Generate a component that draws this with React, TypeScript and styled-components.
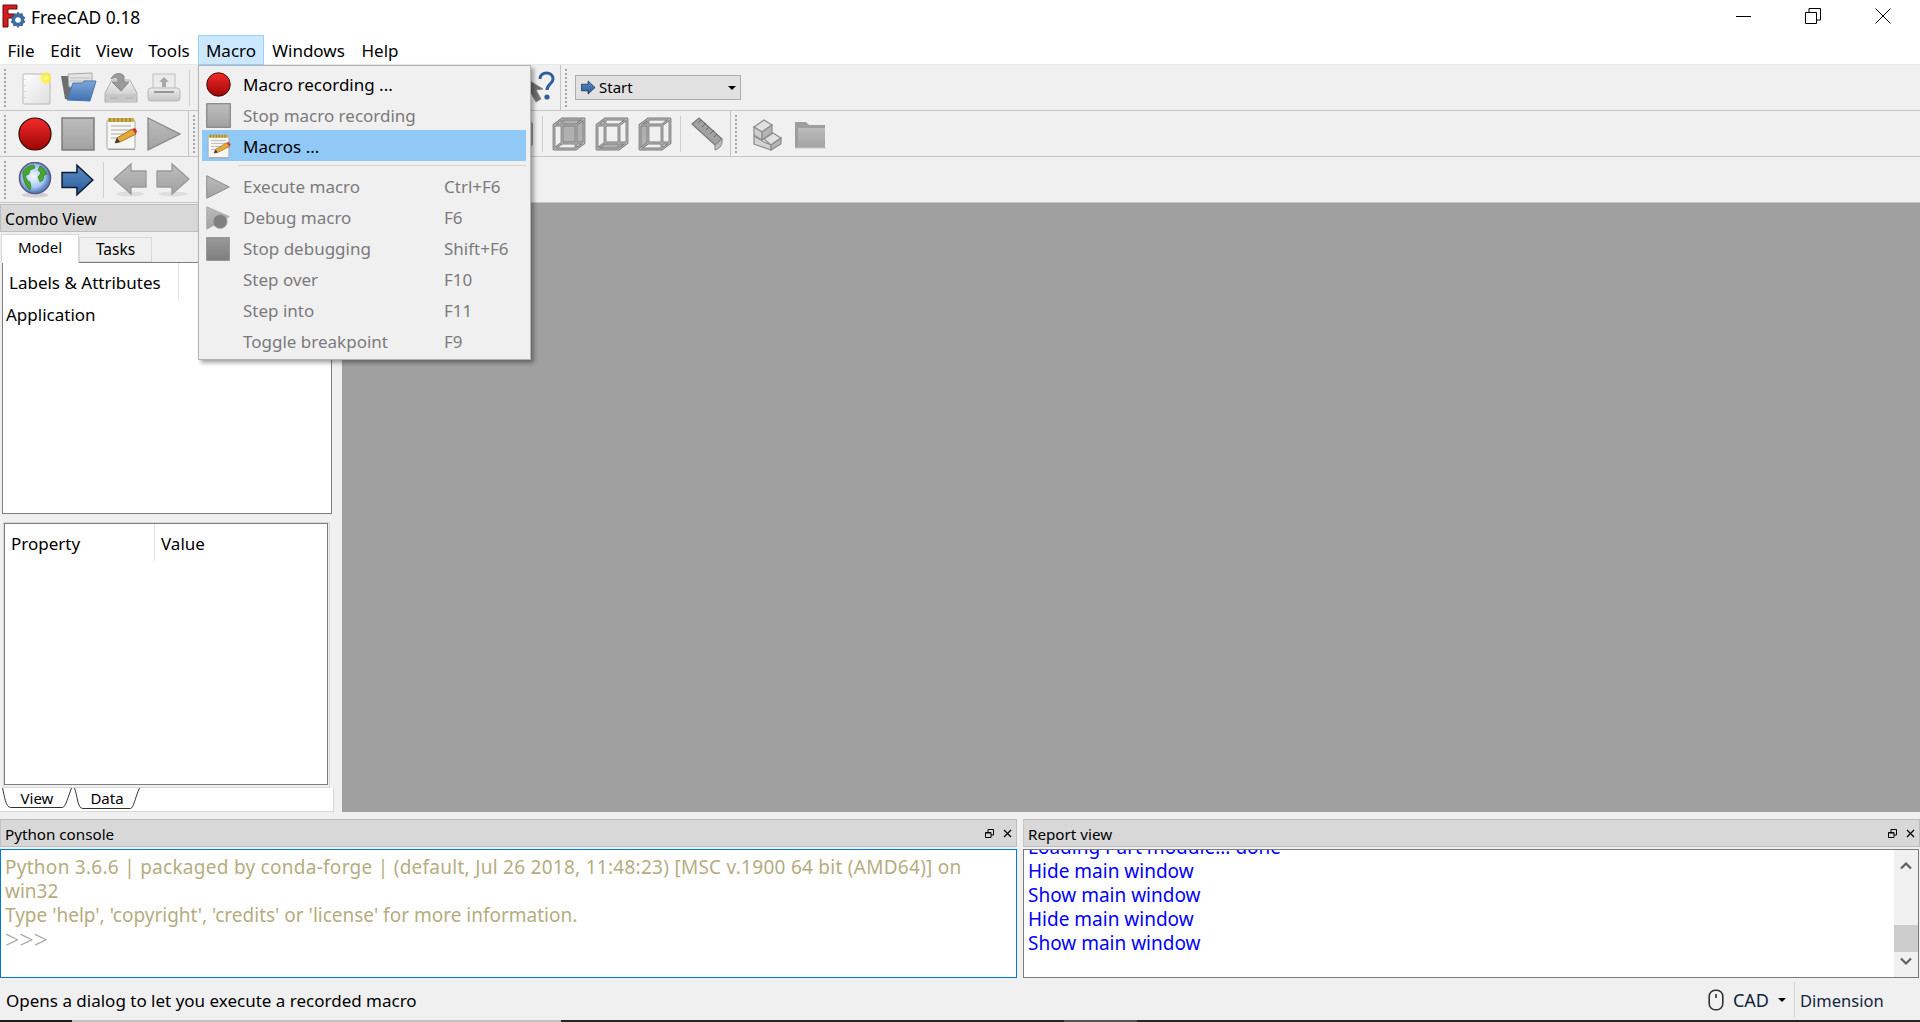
import React from "react";
import styled, { createGlobalStyle } from "styled-components";

const Global = createGlobalStyle`
  html, body { margin: 0; padding: 0; background: #f0f0f0; overflow: hidden; }
  body { font-family: "Noto Sans", "Open Sans", "Liberation Sans", sans-serif; font-size: 17px; color: #000; }
  * { box-sizing: border-box; }
`;

const Page = styled.div`
  position: relative; width: 1920px; height: 1022px; display: flex; flex-direction: column; overflow: hidden;
`;
const TitleBar = styled.div`
  height: 32px; background: #fff; display: flex; align-items: center; padding: 0 2px 0 2px;
`;
const TitleText = styled.span`margin-left: 5px; flex: 1; font-size: 17.4px; padding-top: 2px;`;
const WinBtn = styled.div`width: 70px; height: 32px; display: flex; align-items: center; justify-content: center; color: #000;`;
const MenuBar = styled.div`
  height: 33px; background: #fff; border-bottom: 1px solid #e8e8e8; display: flex; padding-top: 3px;
`;
const MenuItem = styled.div<{ $w: number; $active?: boolean }>`
  width: ${p => p.$w}px; height: 30px; display: flex; align-items: center; justify-content: center; padding-top: 1px;
  background: ${p => (p.$active ? "#cce8ff" : "transparent")};
  border: 1px solid ${p => (p.$active ? "#99d1ff" : "transparent")};
`;
const ToolRow = styled.div`
  height: 46px; background: #f0f0f0; border-bottom: 1px solid #c6c6c6; display: flex; align-items: center;
`;
const Grip = styled.div<{ $w?: number }>`
  width: ${p => p.$w ?? 14}px; height: 38px; flex: none;
  background-image: repeating-linear-gradient(to bottom, #a6a6a6 0 2px, transparent 2px 4px);
  background-size: 2px 100%; background-position: 4px 0; background-repeat: no-repeat;
`;
const Slot = styled.div<{ $w?: number }>`
  width: ${p => p.$w ?? 43}px; height: 40px; flex: none; display: flex; align-items: center; justify-content: center;
`;
const Sep = styled.div`
  width: 9px; height: 36px; flex: none; position: relative;
  background: linear-gradient(#cfcfcf, #cfcfcf) 4px 0 / 1px 100% no-repeat;
`;
const End = styled.div<{ $w: number }>`
  width: ${p => p.$w}px; height: 45px; flex: none; border-right: 1px solid #c6c6c6;
`;
const Spacer = styled.div<{ $w: number }>`width: ${p => p.$w}px; flex: none;`;
const Combo = styled.div`
  width: 166px; height: 25px; background: #e1e1e1; border: 1px solid #adadad; display: flex; align-items: center;
  padding: 0 4px 0 5px; gap: 2px; font-size: 15px;
`;
const ComboText = styled.span`flex: 1; margin-left: 1px; position: relative; top: -1px;`;
const Caret = styled.span`
  width: 0; height: 0; border-left: 4px solid transparent; border-right: 4px solid transparent; border-top: 4px solid #000;
`;

const Content = styled.div`height: 609px; display: flex;`;
const Dock = styled.div`width: 334px; margin-right: 8px; display: flex; flex-direction: column; flex: none; padding-top: 1px;`;
const DockTitle = styled.div`
  height: 28px; flex: none; background: #d8d8d8; border: 1px solid #bdbdbd; border-width: 1px 0 1px 1px;
  display: flex; align-items: center; padding: 1px 0 0 4px; font-size: 15.7px;
`;
const Tabs = styled.div`height: 30px; flex: none; display: flex; align-items: flex-end; padding: 2px 0 0 1px;`;
const TabTop = styled.div<{ $on?: boolean }>`
  height: ${p => (p.$on ? 29 : 25)}px; width: ${p => (p.$on ? 78 : 73)}px; margin-bottom: ${p => (p.$on ? -1 : 0)}px;
  background: ${p => (p.$on ? "#fff" : "#f0f0f0")}; border: 1px solid #d9d9d9; border-bottom: ${p => (p.$on ? "none" : "1px solid #d9d9d9")};
  display: flex; align-items: center; justify-content: center; font-size: ${p => (p.$on ? 15 : 15.5)}px; position: relative; z-index: 1;
  padding-bottom: ${p => (p.$on ? 4 : 2)}px;
`;
const TreePanel = styled.div`
  height: 252px; width: 330px; margin-left: 2px; flex: none; background: #fff; border: 1px solid #7e7e7e; z-index: 0;
`;
const HeaderRow = styled.div`height: 37px; display: flex; align-items: center;`;
const HeadCell = styled.div<{ $w?: number }>`
  width: ${p => (p.$w ? `${p.$w}px` : "auto")}; height: 100%; display: flex; align-items: center; padding-left: 6px;
  border-right: ${p => (p.$w ? "1px solid #e2e2e2" : "none")}; padding-top: 1px;
`;
const TreeRow = styled.div`height: 28px; padding-left: 3px; display: flex; align-items: center;`;
const PropWrap = styled.div`
  margin: 8px 0 0 3px; width: 327px; height: 266px; flex: none; border: 1px solid #d8d8d8; padding: 0 1px 2px 0;
`;
const PropPanel = styled.div`height: 100%; background: #fff; border: 1px solid #7e7e7e;`;
const BottomPane = styled.div`
  flex: 1; background: #fff; border-right: 1px solid #d8d8d8; border-bottom: 1px solid #d8d8d8; padding-left: 2px; display: flex;
`;
const SlantTab = styled.div<{ $w: number }>`
  position: relative; width: ${p => p.$w}px; height: 21px; display: flex; align-items: center; justify-content: center;
  font-size: 15px; margin-right: 2px;
`;
const SlantSvg = styled.svg`position: absolute; inset: 0;`;
const SlantLabel = styled.span`position: relative; top: -1px;`;
const Canvas = styled.div`flex: 1; background: #a0a0a0;`;

const Bottom = styled.div`height: 166px; padding-top: 7px; display: flex; gap: 6px;`;
const Panel = styled.div<{ $w: number }>`width: ${p => p.$w}px; flex: none; display: flex; flex-direction: column;`;
const PanelHead = styled.div`
  height: 28px; background: #d8d8d8; border: 1px solid #bdbdbd; border-left-color: #c4c4c4; flex: none;
  display: flex; align-items: center; padding: 0 4px; font-size: 15.2px;
`;
const PanelTitle = styled.span`flex: 1; padding-top: 2px;`;
const PanelIcons = styled.div`display: flex; align-items: center; gap: 9px; margin-right: 0;`;
const ConsoleBox = styled.div`
  margin-top: 2px; height: 129px; background: #fff; border: 1px solid #0078d7; padding: 5px 0 0 4px; line-height: 24px;
  font-size: 19px; color: #b5ad80; overflow: hidden;
`;
const ConsoleLine = styled.div<{ $track?: number }>`
  white-space: nowrap; letter-spacing: ${p => p.$track ?? 0}px;
`;
const Prompt = styled.div`color: #a8a8a8; font-size: 25px; font-weight: 300; line-height: 24px;`;
const ReportBox = styled.div`
  margin-top: 2px; height: 129px; background: #fff; border: 1px solid #7a7a7a; display: flex; overflow: hidden; width: 896px;
`;
const ReportText = styled.div`
  flex: 1; margin-top: -15px; padding-left: 4px; line-height: 24px; font-size: 19px; color: #0000ff;
`;
const Scroll = styled.div`
  width: 24px; flex: none; background: #f0f0f0; display: flex; flex-direction: column; align-items: center; justify-content: space-between;
  position: relative; padding: 11px 0;
`;
const Thumb = styled.div`position: absolute; top: 75px; left: 0; width: 24px; height: 27px; background: #cdcdcd;`;

const Status = styled.div`height: 42px; display: flex; align-items: center; padding: 2px 0 0 6px; font-size: 17px;`;
const StatusText = styled.div`flex: 1;`;
const StatusMode = styled.div`display: flex; align-items: center; gap: 9px; padding-right: 8px;`;
const StatusCad = styled.span`color: #10243c; font-size: 18px;`;
const StatusSep = styled.div`width: 1px; height: 36px; background: #d4d4d4; margin: 0 5px 0 0;`;
const StatusDim = styled.div`width: 120px; color: #10243c; font-size: 16.5px;`;

const Strip = styled.div`height: 2px; display: flex;`;
const StripPart = styled.div<{ $w?: number; $c: string }>`
  ${p => (p.$w ? `width: ${p.$w}px;` : "flex: 1;")} background: ${p => p.$c};
`;

const Menu = styled.div`
  position: absolute; left: 198px; top: 65px; width: 333px; height: 295px; background: #f0f0f0; border: 1px solid #b4b4b4;
  box-shadow: 3px 3px 4px rgba(0,0,0,0.35); padding: 2px 4px 0 3px; z-index: 5;
`;
const MenuRow = styled.div<{ $hl?: boolean; $off?: boolean }>`
  height: 31px; display: flex; align-items: center; padding-top: 2px;
  background: ${p => (p.$hl ? "#90c8f6" : "transparent")};
  color: ${p => (p.$off ? "#7b7b7b" : "#000")};
`;
const MenuIcon = styled.div`width: 41px; flex: none; display: flex; align-items: center; justify-content: center; padding-right: 9px;`;
const MenuLabel = styled.div`width: 201px; flex: none;`;
const MenuKey = styled.div`flex: 1;`;
const MenuSep = styled.div`height: 1px; background: #d4d4d4; margin: 4px 0 4px 36px;`;

/* ---------- icons ---------- */
type IP = { s?: number };
const Defs = () => (
  <svg width="0" height="0" style={{ position: "absolute" }}>
    <defs>
      <linearGradient id="gRed" x1="0" y1="0" x2="0" y2="1"><stop offset="0" stopColor="#f42a2a" /><stop offset="1" stopColor="#9c0505" /></linearGradient>
      <linearGradient id="gGray" x1="0" y1="0" x2="0" y2="1"><stop offset="0" stopColor="#bcbcbc" /><stop offset="1" stopColor="#a2a2a2" /></linearGradient>
      <linearGradient id="gDark" x1="0" y1="0" x2="0" y2="1"><stop offset="0" stopColor="#9a9a9a" /><stop offset="1" stopColor="#7e7e7e" /></linearGradient>
      <linearGradient id="gPage" x1="0" y1="0" x2="1" y2="1"><stop offset="0" stopColor="#ffffff" /><stop offset="1" stopColor="#dedede" /></linearGradient>
      <linearGradient id="gBlue" x1="0" y1="0" x2="0" y2="1"><stop offset="0" stopColor="#7fa8d8" /><stop offset="1" stopColor="#3f70b0" /></linearGradient>
      <linearGradient id="gArrow" x1="0" y1="0" x2="0" y2="1"><stop offset="0" stopColor="#5b8ec8" /><stop offset="1" stopColor="#2a5a98" /></linearGradient>
      <linearGradient id="gDisk" x1="0" y1="0" x2="0" y2="1"><stop offset="0" stopColor="#eeeeee" /><stop offset="1" stopColor="#c4c4c4" /></linearGradient>
      <radialGradient id="gGlow"><stop offset="0" stopColor="#ffffb0" /><stop offset="0.45" stopColor="#fff03a" /><stop offset="1" stopColor="#fff03a" stopOpacity="0" /></radialGradient>
      <radialGradient id="gOcean" cx="0.45" cy="0.45"><stop offset="0" stopColor="#f4f8ff" /><stop offset="0.7" stopColor="#a8c8ee" /><stop offset="1" stopColor="#5a86c8" /></radialGradient>
    </defs>
  </svg>
);
const NewIcon = () => (
  <svg width="32" height="34" viewBox="0 0 32 34">
    <rect x="4" y="3" width="27" height="30" rx="1" fill="url(#gPage)" stroke="#b8b8b8" />
    <path d="M6 8v1M6 14v1M6 20v1M6 26v1" stroke="#bbb" />
    <circle cx="27" cy="7" r="7" fill="url(#gGlow)" />
  </svg>
);
const OpenIcon = () => (
  <svg width="38" height="34" viewBox="0 0 38 34">
    <path d="M2 5h10l2 1v22H6z" fill="#6e6e6e" />
    <path d="M9 3l24-1v14H10z" fill="#e4e4e4" stroke="#aaa" />
    <path d="M11 7h20M11 10h20" stroke="#bdbdbd" />
    <path d="M8 29l6-17h10l1-2h12l-6 20z" fill="url(#gBlue)" stroke="#4a78b0" />
  </svg>
);
const SaveIcon = () => (
  <svg width="36" height="34" viewBox="0 0 36 34">
    <path d="M2 22L9 9h18l7 13v9H2z" fill="url(#gDisk)" stroke="#b0b0b0" />
    <rect x="3" y="23" width="30" height="8" fill="#c8c8c8" />
    <path d="M7 27h8M22 27h8" stroke="#aaa" />
    <path d="M8 8c2-6 10-7 13-3v6h5l-8 9-9-9h6V8c-2-2-5-1-7 0z" fill="#9a9a9a" stroke="#8a8a8a" />
  </svg>
);
const PrintIcon = () => (
  <svg width="34" height="34" viewBox="0 0 34 34">
    <rect x="6" y="3" width="22" height="15" fill="#ececec" stroke="#c0c0c0" />
    <path d="M17 6l5 5h-3v5h-4v-5h-3z" fill="#a8a8a8" />
    <rect x="1" y="17" width="32" height="13" rx="3" fill="url(#gDisk)" stroke="#b8b8b8" />
    <path d="M7 21h20" stroke="#777" strokeWidth="1.4" />
  </svg>
);
const RecordIcon = ({ s = 34 }: IP) => (
  <svg width={s} height={s} viewBox="0 0 34 34"><circle cx="17" cy="17" r="16" fill="url(#gRed)" stroke="#2a0505" strokeWidth="1.2" /></svg>
);
const StopIcon = ({ s = 34 }: IP) => (
  <svg width={s} height={s} viewBox="0 0 34 34"><rect x="1" y="1" width="32" height="32" fill="url(#gGray)" stroke="#777" strokeWidth="1.4" /></svg>
);
const StopDark = ({ s = 24 }: IP) => (
  <svg width={s} height={s} viewBox="0 0 34 34"><rect x="1" y="1" width="32" height="32" fill="url(#gDark)" stroke="#8a8a8a" strokeWidth="1.4" /></svg>
);
const NotesIcon = ({ s = 34 }: IP) => (
  <svg width={s} height={s} viewBox="0 0 34 34">
    <path d="M4 31h27v2H4z" fill="#9a9a9a" />
    <rect x="3" y="3" width="28" height="29" rx="1.5" fill="#f6f6f2" stroke="#a8a8a8" />
    <rect x="4" y="1" width="26" height="4" fill="#c8b04a" />
    <path d="M6 1v4M10 1v4M14 1v4M18 1v4M22 1v4M26 1v4" stroke="#8a7428" strokeWidth="1" />
    <path d="M7 9h20M7 13h20M7 17h14M7 21h9" stroke="#a8a8a8" />
    <path d="M11 26l2-5 15-9 4 5-16 8z" fill="#e8a83a" stroke="#8a6418" strokeWidth="0.8" />
    <path d="M28 12l4 5 1-3-2-3z" fill="#d83030" />
    <path d="M11 26l2-5 3 4z" fill="#3a3a3a" />
  </svg>
);
const PlayIcon = ({ s = 34 }: IP) => (
  <svg width={s} height={s} viewBox="0 0 34 34"><path d="M1 1l32 16L1 33z" fill="url(#gGray)" stroke="#888" strokeWidth="1.3" /></svg>
);
const DebugIcon = ({ s = 24 }: IP) => (
  <svg width={s} height={s} viewBox="0 0 34 34">
    <path d="M1 1l32 14L1 33z" fill="url(#gGray)" stroke="#a0a0a0" />
    <circle cx="20" cy="22" r="10" fill="#808080" stroke="#aaa" />
  </svg>
);
const GlobeIcon = () => (
  <svg width="34" height="36" viewBox="0 0 34 36">
    <ellipse cx="17" cy="33" rx="13" ry="2.5" fill="#d0d0d0" />
    <circle cx="17" cy="16" r="15.5" fill="url(#gOcean)" stroke="#5a5a88" strokeWidth="1.6" />
    <path d="M5 9c3-4 7-6 11-6l1 3-5 2-1 4-4 2 3 5 2 1 1 5-1 3C8 25 4 17 5 9zM22 4c4 2 6 5 7 8l-3 1-1 5-3 2-2-5 3-4-3-3z" fill="#45a82c" stroke="#205a14" strokeWidth="0.5" />
  </svg>
);
const ArrowR = ({ s = 34 }: IP) => (
  <svg width={s} height={s} viewBox="0 0 32 32"><path d="M1 9h14V2l15 14-15 14v-7H1z" fill="url(#gArrow)" stroke="#0d1c30" strokeWidth="1.4" /></svg>
);
const GrayArrow = ({ left }: { left?: boolean }) => (
  <svg width="34" height="36" viewBox="0 0 34 36">
    <ellipse cx="17" cy="32" rx="14" ry="2.5" fill="#dedede" />
    <path d={left ? "M33 9H18V2L1 17l17 15v-7h15z" : "M1 9h15V2l17 15-17 15v-7H1z"} fill="url(#gGray)" stroke="#999" strokeWidth="1.3" />
  </svg>
);
const HelpIcon = () => (
  <svg width="38" height="36" viewBox="0 0 38 36">
    <path d="M8 8l1 20 5-5 5 9 5-3-5-9 7-1z" fill="#6e6e6e" stroke="#888" />
    <path d="M23 9c0-8 13-8 13 0 0 5-6 5-6 11" fill="none" stroke="#2f5f9c" strokeWidth="3" />
    <circle cx="30" cy="27" r="2.6" fill="#2f5f9c" />
  </svg>
);
const CUBE_LINES = "M3 9h22v24H3zM11 3h22v24H11zM3 9l8-6M25 9l8-6M3 33l8-6M25 33l8-6";
const Cube = ({ v }: { v: 0 | 1 | 2 }) => {
  const faces = ["M11 3h22v24H11z", "M3 33l8-6h22l-8 6z", "M3 9l8-6v24l-8 6z"];
  return (
    <svg width="36" height="36" viewBox="0 0 36 36">
      <path d={faces[v]} fill="#b0b0b0" />
      <path d={CUBE_LINES} fill="none" stroke="#7c7c7c" strokeWidth="2.8" strokeLinejoin="round" />
      <path d={CUBE_LINES} fill="none" stroke="#c0c0c0" strokeWidth="0.9" strokeLinejoin="round" />
    </svg>
  );
};
const Ruler = () => (
  <svg width="32" height="36" viewBox="0 0 32 36">
    <path d="M1 8l7-6 23 21-7 6z" fill="#a2a2a2" stroke="#777" strokeWidth="1.2" />
    <path d="M7 7l3-3M11 11l4-4M15 14l3-3M19 18l4-4M23 21l3-3" stroke="#666" />
    <path d="M24 34v-5l7-6c1 5-2 10-7 11z" fill="#bbb" stroke="#888" />
  </svg>
);
const PartIcon = () => (
  <svg width="32" height="34" viewBox="0 0 32 34">
    <path d="M3 10l10-7 8 5-10 7z" fill="#e0e0e0" stroke="#8c8c8c" strokeWidth="1.2" />
    <path d="M3 10l8 5v8l-8-5z" fill="#cfcfcf" stroke="#8c8c8c" strokeWidth="1.2" />
    <path d="M11 15l10-7v8l-10 7z" fill="#b4b4b4" stroke="#8c8c8c" strokeWidth="1.2" />
    <path d="M13 22l9-6 8 5-10 7z" fill="#e0e0e0" stroke="#8c8c8c" strokeWidth="1.2" />
    <path d="M3 19l10 6 7 3v5L3 27z" fill="#d2d2d2" stroke="#8c8c8c" strokeWidth="1.2" />
    <path d="M20 28l10-7v6l-10 6z" fill="#b4b4b4" stroke="#8c8c8c" strokeWidth="1.2" />
  </svg>
);
const FolderIcon = () => (
  <svg width="32" height="30" viewBox="0 0 32 30">
    <path d="M1 3h11l3 3h16v23H1z" fill="#9e9e9e" />
    <path d="M4 9h27v20H4z" fill="url(#gGray)" />
    <path d="M1 29h31" stroke="#c8c8c8" />
  </svg>
);
const HiddenIcon = () => (
  <svg width="32" height="30" viewBox="0 0 32 30"><rect x="1" y="2" width="31" height="26" rx="5" fill="#a8a8a8" stroke="#8a8a8a" /></svg>
);
const Logo = () => (
  <svg width="24" height="26" viewBox="0 0 24 26">
    <path d="M1 2h14v4H6v5h6v4H6v9H1z" fill="#d41c1c" stroke="#6a0808" strokeWidth="1" />
    <path d="M16 9l1.6 2.2 2.6-.6.6 2.6 2.2 1.4-1.4 2.2 1.4 2.2-2.2 1.4-.6 2.6-2.6-.6L16 24.6l-1.6-2.2-2.6.6-.6-2.6-2.2-1.4 1.4-2.2-1.4-2.2 2.2-1.4.6-2.6 2.6.6z" fill="#3e6ea8" stroke="#24466e" strokeWidth="0.6" />
    <circle cx="16" cy="17" r="2.8" fill="#fff" />
  </svg>
);
const MinIcon = () => <svg width="16" height="16"><path d="M1 8.5h15" stroke="#000" /></svg>;
const RestoreIcon = () => (
  <svg width="16" height="16"><path d="M.5 4.5h11v11H.5zM4 4V.5h11.5V12H12" fill="none" stroke="#000" /></svg>
);
const CloseIcon = () => <svg width="16" height="16"><path d="M.5.5l15 15M15.5.5l-15 15" stroke="#000" /></svg>;
const FloatIcon = () => (
  <svg width="9" height="9"><path d="M.5 3.5h5.5v5H.5zM3 3V.5h5.5V6H6" fill="none" stroke="#000" /><path d="M1 4h5" stroke="#000" /></svg>
);
const XIcon = () => <svg width="9" height="9"><path d="M1 1l7 7M8 1l-7 7" stroke="#000" strokeWidth="1.3" /></svg>;
const Chevron = ({ down }: { down?: boolean }) => (
  <svg width="12" height="9" viewBox="0 0 12 9"><path d={down ? "M1 1.5l5 5 5-5" : "M1 7.5l5-5 5 5"} fill="none" stroke="#606060" strokeWidth="2.2" /></svg>
);
const MouseIcon = () => (
  <svg width="16" height="22" viewBox="0 0 16 22"><rect x="1.2" y="1.2" width="13.6" height="19.6" rx="6" fill="none" stroke="#333" strokeWidth="1.6" /><path d="M8 5v4" stroke="#333" strokeWidth="1.6" /></svg>
);
const ViewShape = () => (
  <SlantSvg width="70" height="21" viewBox="0 0 70 21"><path d="M0.5 0c2 8 3 19 8 19.5h52c3 0 6-12 9-19.5" fill="#fff" stroke="#333" /></SlantSvg>
);
const DataShape = () => (
  <SlantSvg width="66" height="21" viewBox="0 0 66 21"><path d="M0.5 0c3 8 3 20 8 20.5h48c3 0 5-12 9-20.5" fill="#fff" stroke="#333" /></SlantSvg>
);

const menuTop: [string, number, boolean?][] = [
  ["File", 42], ["Edit", 47], ["View", 51], ["Tools", 58], ["Macro", 66, true], ["Windows", 89], ["Help", 54],
];

export default function App() {
  return (
    <Page>
      <Global />
      <Defs />
      <TitleBar>
        <Logo />
        <TitleText>FreeCAD 0.18</TitleText>
        <WinBtn><MinIcon /></WinBtn>
        <WinBtn><RestoreIcon /></WinBtn>
        <WinBtn><CloseIcon /></WinBtn>
      </TitleBar>
      <MenuBar>
        {menuTop.map(([t, w, a]) => <MenuItem key={t} $w={w} $active={a}>{t}</MenuItem>)}
      </MenuBar>

      <ToolRow>
        <Grip $w={13} />
        <Slot><NewIcon /></Slot>
        <Slot><OpenIcon /></Slot>
        <Slot><SaveIcon /></Slot>
        <Slot><PrintIcon /></Slot>
        <Sep />
        <Spacer $w={323} />
        <Slot $w={38}><HelpIcon /></Slot>
        <End $w={6} />
        <Grip />
        <Combo>
          <ArrowR s={15} />
          <ComboText>Start</ComboText>
          <Caret />
        </Combo>
      </ToolRow>
      <ToolRow>
        <Grip $w={13} />
        <Slot><RecordIcon /></Slot>
        <Slot><StopIcon /></Slot>
        <Slot><NotesIcon /></Slot>
        <Slot><PlayIcon /></Slot>
        <End $w={4} />
        <Grip />
        <Spacer $w={292} />
        <Slot><HiddenIcon /></Slot>
        <Sep />
        <Slot><Cube v={0} /></Slot>
        <Slot><Cube v={1} /></Slot>
        <Slot><Cube v={2} /></Slot>
        <Sep />
        <Slot><Ruler /></Slot>
        <End $w={3} />
        <Grip />
        <Slot><PartIcon /></Slot>
        <Slot><FolderIcon /></Slot>
      </ToolRow>
      <ToolRow>
        <Grip $w={13} />
        <Slot><GlobeIcon /></Slot>
        <Slot><ArrowR /></Slot>
        <Sep />
        <Slot><GrayArrow left /></Slot>
        <Slot><GrayArrow /></Slot>
      </ToolRow>

      <Content>
        <Dock>
          <DockTitle>Combo View</DockTitle>
          <Tabs>
            <TabTop $on>Model</TabTop>
            <TabTop>Tasks</TabTop>
          </Tabs>
          <TreePanel>
            <HeaderRow>
              <HeadCell $w={176}>Labels &amp; Attributes</HeadCell>
            </HeaderRow>
            <TreeRow>Application</TreeRow>
          </TreePanel>
          <PropWrap>
            <PropPanel>
              <HeaderRow>
                <HeadCell $w={150}>Property</HeadCell>
                <HeadCell>Value</HeadCell>
              </HeaderRow>
            </PropPanel>
          </PropWrap>
          <BottomPane>
            <SlantTab $w={70}><ViewShape /><SlantLabel>View</SlantLabel></SlantTab>
            <SlantTab $w={66}><DataShape /><SlantLabel>Data</SlantLabel></SlantTab>
          </BottomPane>
        </Dock>
        <Canvas />
      </Content>

      <Bottom>
        <Panel $w={1017}>
          <PanelHead>
            <PanelTitle>Python console</PanelTitle>
            <PanelIcons><FloatIcon /><XIcon /></PanelIcons>
          </PanelHead>
          <ConsoleBox>
            <ConsoleLine $track={0.27}>Python 3.6.6 | packaged by conda-forge | (default, Jul 26 2018, 11:48:23) [MSC v.1900 64 bit (AMD64)] on</ConsoleLine>
            <ConsoleLine>win32</ConsoleLine>
            <ConsoleLine>Type 'help', 'copyright', 'credits' or 'license' for more information.</ConsoleLine>
            <Prompt>&gt;&gt;&gt;</Prompt>
          </ConsoleBox>
        </Panel>
        <Panel $w={897}>
          <PanelHead>
            <PanelTitle>Report view</PanelTitle>
            <PanelIcons><FloatIcon /><XIcon /></PanelIcons>
          </PanelHead>
          <ReportBox>
            <ReportText>
              <div>Loading Part module... done</div>
              <div>Hide main window</div>
              <div>Show main window</div>
              <div>Hide main window</div>
              <div>Show main window</div>
            </ReportText>
            <Scroll>
              <Chevron />
              <Thumb />
              <Chevron down />
            </Scroll>
          </ReportBox>
        </Panel>
      </Bottom>

      <Status>
        <StatusText>Opens a dialog to let you execute a recorded macro</StatusText>
        <StatusMode><MouseIcon /><StatusCad>CAD</StatusCad><Caret /></StatusMode>
        <StatusSep />
        <StatusDim>Dimension</StatusDim>
      </Status>
      <Strip>
        <StripPart $w={72} $c="#1c1c1c" />
        <StripPart $w={489} $c="#c0c0c0" />
        <StripPart $w={503} $c="#262626" />
        <StripPart $w={73} $c="#555" />
        <StripPart $c="#262626" />
      </Strip>

      <Menu>
        <MenuRow><MenuIcon><RecordIcon s={25} /></MenuIcon><MenuLabel>Macro recording ...</MenuLabel></MenuRow>
        <MenuRow $off><MenuIcon><StopIcon s={25} /></MenuIcon><MenuLabel>Stop macro recording</MenuLabel></MenuRow>
        <MenuRow $hl><MenuIcon><NotesIcon s={25} /></MenuIcon><MenuLabel>Macros ...</MenuLabel></MenuRow>
        <MenuSep />
        <MenuRow $off><MenuIcon><PlayIcon s={24} /></MenuIcon><MenuLabel>Execute macro</MenuLabel><MenuKey>Ctrl+F6</MenuKey></MenuRow>
        <MenuRow $off><MenuIcon><DebugIcon /></MenuIcon><MenuLabel>Debug macro</MenuLabel><MenuKey>F6</MenuKey></MenuRow>
        <MenuRow $off><MenuIcon><StopDark /></MenuIcon><MenuLabel>Stop debugging</MenuLabel><MenuKey>Shift+F6</MenuKey></MenuRow>
        <MenuRow $off><MenuIcon /><MenuLabel>Step over</MenuLabel><MenuKey>F10</MenuKey></MenuRow>
        <MenuRow $off><MenuIcon /><MenuLabel>Step into</MenuLabel><MenuKey>F11</MenuKey></MenuRow>
        <MenuRow $off><MenuIcon /><MenuLabel>Toggle breakpoint</MenuLabel><MenuKey>F9</MenuKey></MenuRow>
      </Menu>
    </Page>
  );
}
